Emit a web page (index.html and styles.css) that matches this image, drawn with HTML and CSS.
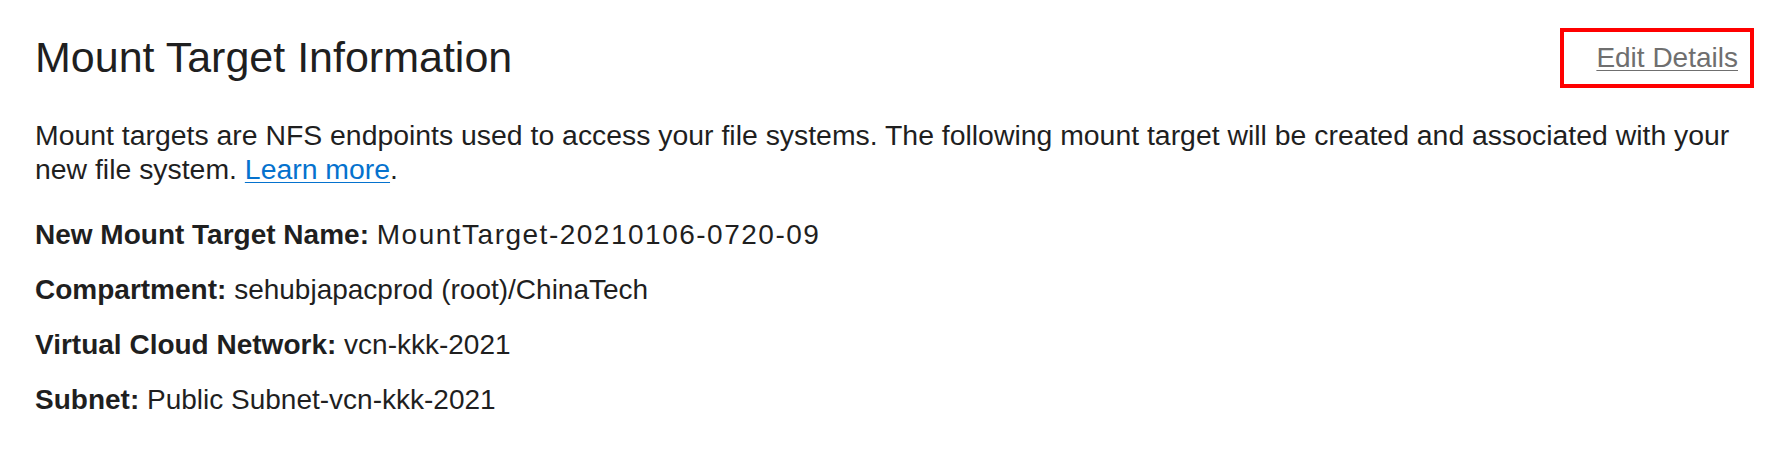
FILE: index.html
```html
<!DOCTYPE html>
<html lang="en">
<head>
<meta charset="utf-8">
<title>Mount Target Information</title>
<link rel="stylesheet" href="styles.css">
</head>
<body>
<section class="panel">
  <header class="panel-header">
    <h1 class="panel-title">Mount Target Information</h1>
    <div class="edit-box"><a class="edit-link" href="#">Edit Details</a></div>
  </header>
  <p class="intro">Mount targets are NFS endpoints used to access your file systems. The following mount target will be created and associated with your new file system. <a class="learn" href="#">Learn more</a>.</p>
  <dl class="fields">
    <div class="field"><dt>New Mount Target Name:</dt> <dd class="wide">MountTarget-20210106-0720-09</dd></div>
    <div class="field"><dt>Compartment:</dt> <dd>sehubjapacprod (root)/ChinaTech</dd></div>
    <div class="field"><dt>Virtual Cloud Network:</dt> <dd>vcn-kkk-2021</dd></div>
    <div class="field"><dt>Subnet:</dt> <dd>Public Subnet-vcn-kkk-2021</dd></div>
  </dl>
</section>
</body>
</html>
```
FILE: styles.css
```css
html, body {
  margin: 0;
  padding: 0;
  background: #ffffff;
}
body {
  font-family: "Liberation Sans", Arial, sans-serif;
  color: #1f1f1f;
}
.panel {
  padding: 28px 20px 0 35px;
}
.panel-header {
  display: flex;
  justify-content: space-between;
  align-items: flex-start;
}
.panel-title {
  margin: 5px 0 0;
  font-size: 43px;
  line-height: 48px;
  font-weight: 400;
  color: #1f1f1f;
}
.edit-box {
  border: 4px solid #ff0000;
  padding: 10px 12px 10px 32px;
}
.edit-link {
  display: block;
  font-size: 28px;
  line-height: 32px;
  color: #6f6f6f;
  text-decoration: underline;
  text-underline-offset: 3px;
  text-decoration-thickness: 1px;
}
.intro {
  margin: 30px 0 0;
  font-size: 28.4px;
  line-height: 34px;
}
.learn {
  color: #0572ce;
  text-decoration: underline;
  text-decoration-thickness: 1px;
  text-underline-offset: 3px;
}
.fields {
  margin: 33px 0 0;
  display: flex;
  flex-direction: column;
  gap: 23px;
}
.field {
  font-size: 28px;
  line-height: 32px;
}
.field dt {
  display: inline;
  font-weight: 700;
}
.field dd {
  display: inline;
  margin: 0;
}
.field dd.wide {
  letter-spacing: 1.5px;
}
```
